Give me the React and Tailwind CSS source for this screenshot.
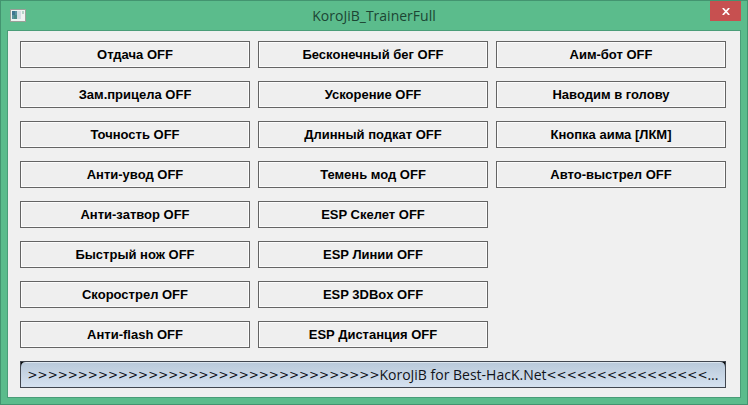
import React, { useState } from "react";

const columns = [
  [
    "Отдача OFF",
    "Зам.прицела OFF",
    "Точность OFF",
    "Анти-увод OFF",
    "Анти-затвор OFF",
    "Быстрый нож OFF",
    "Скорострел OFF",
    "Анти-flash OFF",
  ],
  [
    "Бесконечный бег OFF",
    "Ускорение OFF",
    "Длинный подкат OFF",
    "Темень мод OFF",
    "ESP Скелет OFF",
    "ESP Линии OFF",
    "ESP 3DBox OFF",
    "ESP Дистанция OFF",
  ],
  ["Аим-бот OFF", "Наводим в голову", "Кнопка аима [ЛКМ]", "Авто-выстрел OFF"],
];

const WindowIcon = () => (
  <svg width="16" height="13" viewBox="0 0 16 13" className="shrink-0">
    <rect x="0.5" y="0.5" width="15" height="12" fill="#eef3f1" stroke="#9a9f98" />
    <rect x="2" y="2" width="5" height="8" fill="#5b93a0" />
    <rect x="2" y="2" width="3" height="4" fill="#3f7690" />
    <rect x="4" y="6" width="3" height="4" fill="#4a8c86" />
    <rect x="7" y="2" width="4" height="8" fill="#d3dde3" />
    <rect x="12" y="2" width="2" height="3" fill="#b4d3c6" />
  </svg>
);

const TrainerButton = ({ label }) => {
  const [on, setOn] = useState(false);
  const text = on ? label.replace("OFF", "ON") : label;

  return (
    <button
      type="button"
      onClick={() => setOn(!on)}
      className="h-[27px] w-full border border-[#646464] bg-[#efefef] text-center text-[13px] leading-4 font-bold text-black shadow-[inset_0_0_0_1px_#fcfcfc]"
    >
      {text}
    </button>
  );
};

const App = () => {
  return (
    <div className="flex min-h-screen w-full flex-col border border-[#439470] bg-[#5bbc8c] px-[6px] pb-[6px] font-['Liberation_Sans',sans-serif]">
      {/* Title bar */}
      <header className="grid h-[29px] shrink-0 grid-cols-[1fr_auto_1fr]">
        <div className="flex items-center pl-[3px]">
          <WindowIcon />
        </div>
        <h1 className="self-center font-['Open_Sans',sans-serif] text-[14px] leading-5 text-[#1c4634]">
          KoroJiB_TrainerFull
        </h1>
        <button
          type="button"
          aria-label="Close"
          className="flex h-5 w-[31px] items-center justify-center justify-self-end bg-[#c75050]"
        >
          <svg width="8" height="7" viewBox="0 0 8 7">
            <path d="M0.8 0L7.2 7M7.2 0L0.8 7" stroke="#fff" strokeWidth="1.7" />
          </svg>
        </button>
      </header>

      <main className="flex-1 border border-[#4a9d78] bg-[#f0f0f0] pt-[10px] pr-[14px] pb-2 pl-3">
        {/* Options */}
        <div className="grid grid-cols-3 gap-2">
          {columns.map((labels, i) => (
            <div key={i} className="flex flex-col gap-[13px]">
              {labels.map((label) => (
                <TrainerButton key={label} label={label} />
              ))}
            </div>
          ))}
        </div>

        {/* Site link */}
        <button
          type="button"
          className="relative mt-[13px] flex h-[27px] w-full items-center justify-center overflow-hidden border border-[#41464f] bg-linear-to-b from-[#b9c9da] to-[#d6e2f0] font-['Open_Sans',sans-serif] text-[14px] leading-5 whitespace-nowrap text-[#10131a] shadow-[inset_0_1px_0_#dbe5ef]"
        >
          <svg width="5" height="5" viewBox="0 0 5 5" className="absolute top-0 left-0">
            <path d="M0 0H5Q0 0 0 5Z" fill="#0b0d10" />
          </svg>
          <svg width="5" height="5" viewBox="0 0 5 5" className="absolute top-0 right-0">
            <path d="M5 0H0Q5 0 5 5Z" fill="#0b0d10" />
          </svg>
          <span className="font-['DejaVu_Sans',sans-serif] text-[12px]">{">".repeat(35)}</span>
          <span>KoroJiB for Best-HacK.Net</span>
          <span className="font-['DejaVu_Sans',sans-serif] text-[12px]">{"<".repeat(16)}</span>
          <span>...</span>
        </button>
      </main>
    </div>
  );
};

export default App;
